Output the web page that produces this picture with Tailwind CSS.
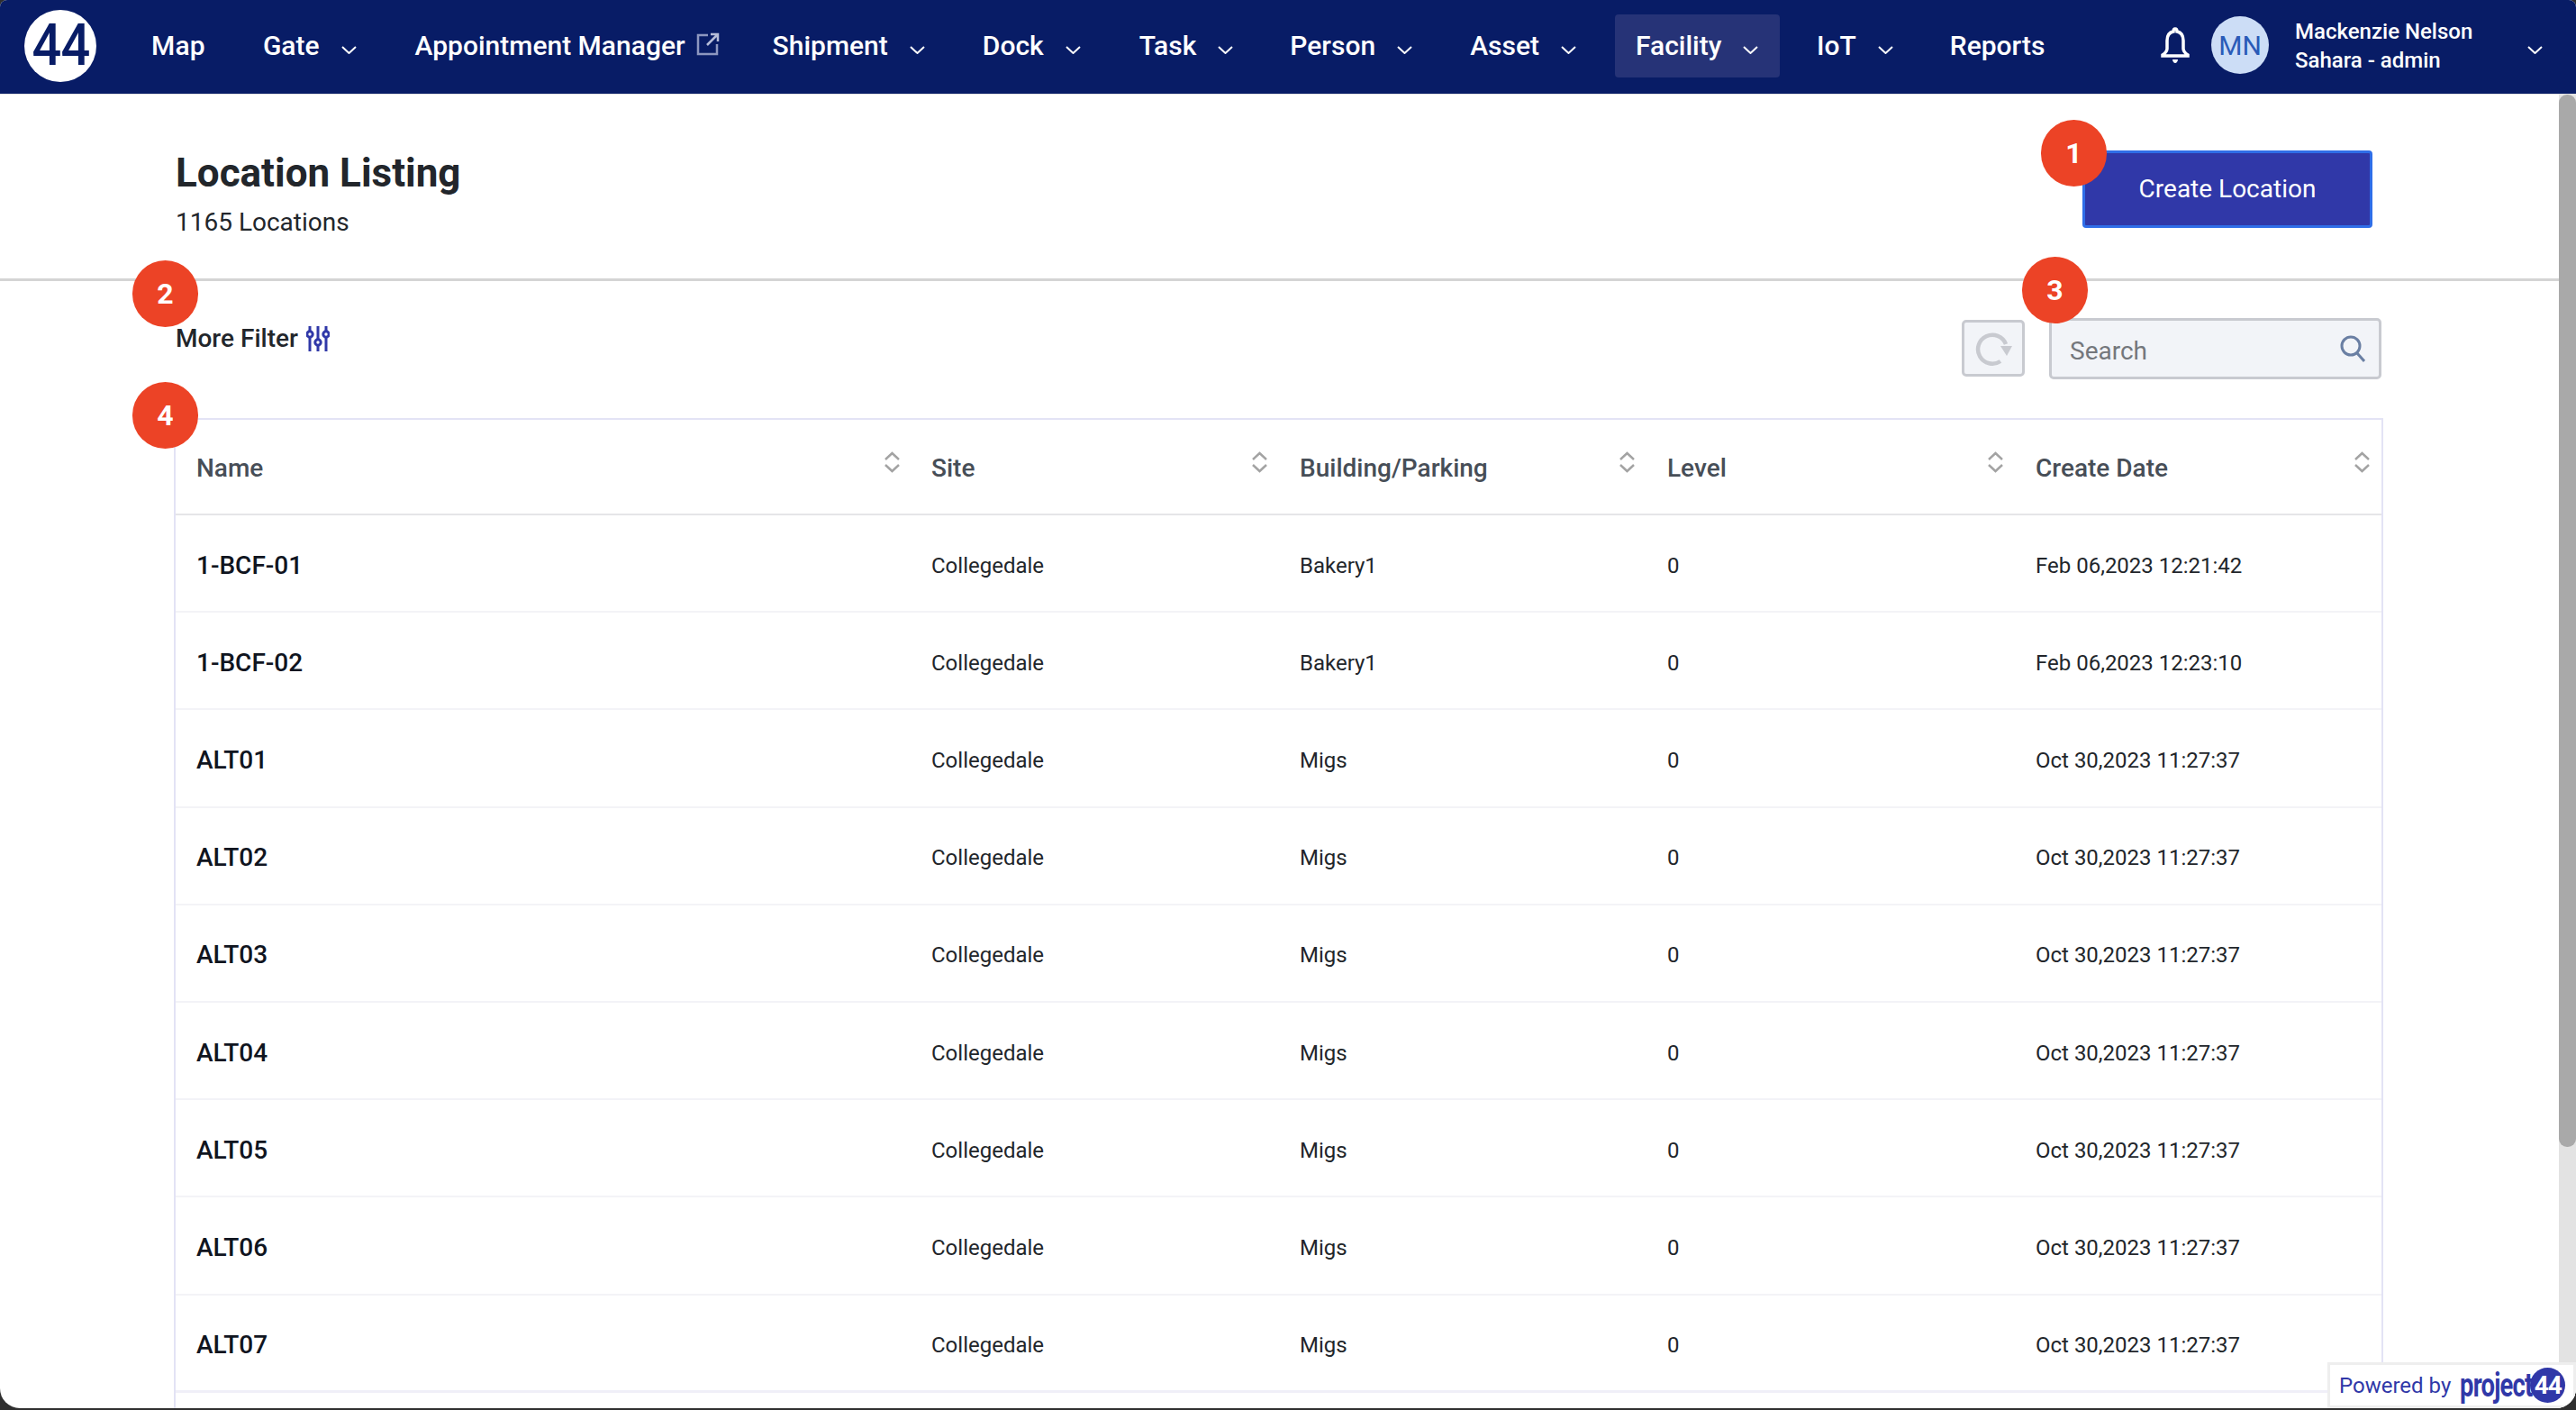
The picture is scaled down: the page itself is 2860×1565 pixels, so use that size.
<!DOCTYPE html>
<html lang="en">

<head>
    <meta charset="UTF-8">
    <meta name="viewport" content="width=device-width, initial-scale=1.0">
    <title>Location Listing</title>
    <script src="https://cdn.jsdelivr.net/npm/@tailwindcss/browser@4"></script>
</head>

<body class="bg-[#2f2f2f] font-['Roboto',sans-serif] overflow-hidden">
    <div class="relative h-[1563px] w-[2860px] overflow-hidden rounded-b-[22px] rounded-t-[8px] bg-white flex flex-col">

        <!-- Top nav -->
        <header class="h-[105px] shrink-0 pb-[3px] bg-[#081c66] border-b border-[#e4e4e4] flex items-center text-white text-[30px] font-medium">
            <div class="ml-[27px] w-[80px] h-[80px] rounded-full bg-white flex items-center justify-center text-[#081c66]">
                <span class="text-[64px] leading-none font-medium scale-x-90 tracking-[-1px]">44</span>
            </div>
            <a class="ml-[61px] tracking-[0.2px]">Map</a>
            <a class="ml-[64px] flex items-center gap-[24px]">Gate
                <svg class="w-[17px] h-[9px] mt-[10px]" viewBox="0 0 17 9" fill="none" stroke="white" stroke-width="2"><path d="M1 1l7.500 7 7.500-7"/></svg>
            </a>
            <a class="ml-[65px] flex items-center gap-[12px]">Appointment Manager
                <svg class="w-[26px] h-[26px] -mt-[4px]" viewBox="0 0 26 26" fill="none" stroke="#8d97c0" stroke-width="2.500"><path d="M13 3H2v21h21V13"/><path d="M12 14L24 2M16 2h8v8" stroke="#b6bdd9"/></svg>
            </a>
            <a class="ml-[59px] flex items-center gap-[24px]">Shipment
                <svg class="w-[17px] h-[9px] mt-[10px]" viewBox="0 0 17 9" fill="none" stroke="white" stroke-width="2"><path d="M1 1l7.500 7 7.500-7"/></svg>
            </a>
            <a class="ml-[64px] flex items-center gap-[24px]">Dock
                <svg class="w-[17px] h-[9px] mt-[10px]" viewBox="0 0 17 9" fill="none" stroke="white" stroke-width="2"><path d="M1 1l7.500 7 7.500-7"/></svg>
            </a>
            <a class="ml-[65px] flex items-center gap-[24px]">Task
                <svg class="w-[17px] h-[9px] mt-[10px]" viewBox="0 0 17 9" fill="none" stroke="white" stroke-width="2"><path d="M1 1l7.500 7 7.500-7"/></svg>
            </a>
            <a class="ml-[63px] flex items-center gap-[24px]">Person
                <svg class="w-[17px] h-[9px] mt-[10px]" viewBox="0 0 17 9" fill="none" stroke="white" stroke-width="2"><path d="M1 1l7.500 7 7.500-7"/></svg>
            </a>
            <a class="ml-[64px] flex items-center gap-[24px]">Asset
                <svg class="w-[17px] h-[9px] mt-[10px]" viewBox="0 0 17 9" fill="none" stroke="white" stroke-width="2"><path d="M1 1l7.500 7 7.500-7"/></svg>
            </a>
            <a class="ml-[43px] w-[183px] h-[70px] pl-[23px] rounded-[4px] bg-[#263377] flex items-center gap-[24px]">Facility
                <svg class="w-[17px] h-[9px] mt-[10px]" viewBox="0 0 17 9" fill="none" stroke="white" stroke-width="2"><path d="M1 1l7.500 7 7.500-7"/></svg>
            </a>
            <a class="ml-[41px] flex items-center gap-[24px]">IoT
                <svg class="w-[17px] h-[9px] mt-[10px]" viewBox="0 0 17 9" fill="none" stroke="white" stroke-width="2"><path d="M1 1l7.500 7 7.500-7"/></svg>
            </a>
            <a class="ml-[63px]">Reports</a>
            <svg class="absolute left-[2398px] top-[30px] w-[34px] h-[40px]" viewBox="0 0 34 40" fill="none" stroke="white" stroke-width="3.500"><path d="M17 2c-1 0-2 1-2 3-5 1-7 5-7 10v9c0 3-2 5-5 7v1h28v-1c-3-2-5-4-5-7v-9c0-5-2-9-7-10 0-2-1-3-2-3z"/><path d="M14 36c0 2 1.500 4 3 4s3-2 3-4" fill="white" stroke="none"/></svg>
            <div class="absolute left-[2455px] top-[18px] w-[64px] h-[64px] rounded-full bg-[#ccddf6] text-[#2a5bb8] text-[30px] font-normal flex items-center justify-center">MN</div>
            <div class="absolute left-[2548px] top-[19px] text-[24px] leading-[32px] font-medium">
                <div>Mackenzie Nelson</div>
                <div>Sahara - admin</div>
            </div>
            <svg class="absolute left-[2806px] top-[51px] w-[17px] h-[9px]" viewBox="0 0 17 9" fill="none" stroke="white" stroke-width="2"><path d="M1 1l7.500 7 7.500-7"/></svg>
        </header>

        <div class="flex flex-1 min-h-0">
            <main class="w-[2841px] shrink-0 overflow-hidden">
                <!-- Page title -->
                <section class="h-[207px] border-b-[3px] border-[#d4d4d4] pl-[195px] pr-[207px] flex justify-between">
                    <div class="pt-[62px]">
                        <h1 class="text-[44px] leading-[50px] font-bold text-[#22262b]">Location Listing</h1>
                        <p class="mt-[12px] text-[28px] leading-[36px] text-[#22262b]">1165 Locations</p>
                    </div>
                    <button class="mt-[62px] w-[322px] h-[86px] rounded-[4px] bg-[#3038a8] border-[3px] border-[#2f6ee8] text-white text-[28px]">Create Location</button>
                </section>

                <!-- Filter and search -->
                <section class="h-[152px] pl-[195px] pr-[197px] flex justify-between">
                    <div class="mt-[46px] h-[36px] flex items-center gap-[9px] text-[28px] font-medium text-[#22262b]">More Filter
                        <svg class="w-[26px] h-[28px]" viewBox="0 0 26 28" fill="none" stroke="#3038a8" stroke-width="3"><path d="M4 0v6M4 13v15M13 0v14M13 21v7M22 0v5M22 13v15"/><circle cx="4" cy="9" r="3.200"/><circle cx="13" cy="18" r="3.200"/><circle cx="22" cy="9" r="3.200"/></svg>
                    </div>
                    <div class="flex gap-[27px] mt-[41px]">
                        <button class="mt-[2px] w-[70px] h-[63px] rounded-[5px] bg-[#f2f4f8] border-[3px] border-[#c8cad0] flex items-center justify-center">
                            <svg class="w-[44px] h-[40px]" viewBox="0 0 44 40" fill="none"><path d="M30 34A16 16 0 1 1 36 15" stroke="#c8cad0" stroke-width="4.500"/><path d="M30 17h13l-6 11z" fill="#c8cad0"/></svg>
                        </button>
                        <div class="w-[369px] h-[68px] rounded-[5px] bg-[#f2f4f8] border-[3px] border-[#c8cad0] flex items-center justify-between pl-[20px] pr-[15px]">
                            <span class="mt-[6px] text-[28px] text-[#74777c]">Search</span>
                            <svg class="w-[28px] h-[30px]" viewBox="0 0 28 30" fill="none" stroke="#6a7fa3" stroke-width="3"><circle cx="12" cy="12" r="10"/><path d="M19 20l8 9"/></svg>
                        </div>
                    </div>
                </section>

                <!-- Table -->
                <section class="ml-[193px] w-[2453px] border-x-[2px] border-t-[2px] border-[#e3e3f5]">
                    <div class="h-[106px] border-b-[2px] border-[#e5e5e8] grid grid-cols-[816px_409px_408px_409px_1fr] text-[28px] font-medium text-[#474e57]">
                        <div class="pl-[23px] pr-[11px] flex justify-between pt-[33px]"><span>Name</span>
                            <svg class="w-[19px] h-[24px] mt-[2px]" viewBox="0 0 19 24" fill="none" stroke="#a3a3a3" stroke-width="2.500"><path d="M2 9l7.500-7 7.500 7M2 15l7.500 7 7.500-7"/></svg>
                        </div>
                        <div class="pl-[23px] pr-[12px] flex justify-between pt-[33px]"><span>Site</span>
                            <svg class="w-[19px] h-[24px] mt-[2px]" viewBox="0 0 19 24" fill="none" stroke="#a3a3a3" stroke-width="2.500"><path d="M2 9l7.500-7 7.500 7M2 15l7.500 7 7.500-7"/></svg>
                        </div>
                        <div class="pl-[23px] pr-[12px] flex justify-between pt-[33px]"><span>Building/Parking</span>
                            <svg class="w-[19px] h-[24px] mt-[2px]" viewBox="0 0 19 24" fill="none" stroke="#a3a3a3" stroke-width="2.500"><path d="M2 9l7.500-7 7.500 7M2 15l7.500 7 7.500-7"/></svg>
                        </div>
                        <div class="pl-[23px] pr-[12px] flex justify-between pt-[33px]"><span>Level</span>
                            <svg class="w-[19px] h-[24px] mt-[2px]" viewBox="0 0 19 24" fill="none" stroke="#a3a3a3" stroke-width="2.500"><path d="M2 9l7.500-7 7.500 7M2 15l7.500 7 7.500-7"/></svg>
                        </div>
                        <div class="pl-[23px] pr-[12px] flex justify-between pt-[33px]"><span>Create Date</span>
                            <svg class="w-[19px] h-[24px] mt-[2px]" viewBox="0 0 19 24" fill="none" stroke="#a3a3a3" stroke-width="2.500"><path d="M2 9l7.500-7 7.500 7M2 15l7.500 7 7.500-7"/></svg>
                        </div>
                    </div>

                    <div class="h-[108.200px] pt-[5px] border-b-[2px] border-[#f3f3f7] grid grid-cols-[816px_409px_408px_409px_1fr] items-center text-[24px] text-[#22262b] [&>div]:pl-[23px]">
                        <div class="text-[28px] font-medium text-[#10151f]">1-BCF-01</div><div>Collegedale</div><div>Bakery1</div><div>0</div><div>Feb 06,2023 12:21:42</div>
                    </div>
                    <div class="h-[108.200px] pt-[5px] border-b-[2px] border-[#f3f3f7] grid grid-cols-[816px_409px_408px_409px_1fr] items-center text-[24px] text-[#22262b] [&>div]:pl-[23px]">
                        <div class="text-[28px] font-medium text-[#10151f]">1-BCF-02</div><div>Collegedale</div><div>Bakery1</div><div>0</div><div>Feb 06,2023 12:23:10</div>
                    </div>
                    <div class="h-[108.200px] pt-[5px] border-b-[2px] border-[#f3f3f7] grid grid-cols-[816px_409px_408px_409px_1fr] items-center text-[24px] text-[#22262b] [&>div]:pl-[23px]">
                        <div class="text-[28px] font-medium text-[#10151f]">ALT01</div><div>Collegedale</div><div>Migs</div><div>0</div><div>Oct 30,2023 11:27:37</div>
                    </div>
                    <div class="h-[108.200px] pt-[5px] border-b-[2px] border-[#f3f3f7] grid grid-cols-[816px_409px_408px_409px_1fr] items-center text-[24px] text-[#22262b] [&>div]:pl-[23px]">
                        <div class="text-[28px] font-medium text-[#10151f]">ALT02</div><div>Collegedale</div><div>Migs</div><div>0</div><div>Oct 30,2023 11:27:37</div>
                    </div>
                    <div class="h-[108.200px] pt-[5px] border-b-[2px] border-[#f3f3f7] grid grid-cols-[816px_409px_408px_409px_1fr] items-center text-[24px] text-[#22262b] [&>div]:pl-[23px]">
                        <div class="text-[28px] font-medium text-[#10151f]">ALT03</div><div>Collegedale</div><div>Migs</div><div>0</div><div>Oct 30,2023 11:27:37</div>
                    </div>
                    <div class="h-[108.200px] pt-[5px] border-b-[2px] border-[#f3f3f7] grid grid-cols-[816px_409px_408px_409px_1fr] items-center text-[24px] text-[#22262b] [&>div]:pl-[23px]">
                        <div class="text-[28px] font-medium text-[#10151f]">ALT04</div><div>Collegedale</div><div>Migs</div><div>0</div><div>Oct 30,2023 11:27:37</div>
                    </div>
                    <div class="h-[108.200px] pt-[5px] border-b-[2px] border-[#f3f3f7] grid grid-cols-[816px_409px_408px_409px_1fr] items-center text-[24px] text-[#22262b] [&>div]:pl-[23px]">
                        <div class="text-[28px] font-medium text-[#10151f]">ALT05</div><div>Collegedale</div><div>Migs</div><div>0</div><div>Oct 30,2023 11:27:37</div>
                    </div>
                    <div class="h-[108.200px] pt-[5px] border-b-[2px] border-[#f3f3f7] grid grid-cols-[816px_409px_408px_409px_1fr] items-center text-[24px] text-[#22262b] [&>div]:pl-[23px]">
                        <div class="text-[28px] font-medium text-[#10151f]">ALT06</div><div>Collegedale</div><div>Migs</div><div>0</div><div>Oct 30,2023 11:27:37</div>
                    </div>
                    <div class="h-[108.200px] pt-[5px] border-b-[3px] border-[#f0eff8] grid grid-cols-[816px_409px_408px_409px_1fr] items-center text-[24px] text-[#22262b] [&>div]:pl-[23px]">
                        <div class="text-[28px] font-medium text-[#10151f]">ALT07</div><div>Collegedale</div><div>Migs</div><div>0</div><div>Oct 30,2023 11:27:37</div>
                    </div>
                    <div class="h-[40px]"></div>
                </section>
            </main>

            <!-- Scrollbar -->
            <div class="w-[19px] bg-[#e3e3e3]">
                <div class="h-[1168px] bg-[#a9a9a9] rounded-[9px]"></div>
            </div>
        </div>

        <!-- Step badges -->
        <div class="absolute left-[2266px] top-[133px] w-[73px] h-[74px] rounded-full bg-[#ec4326] text-white text-[32px] font-bold flex items-center justify-center">1</div>
        <div class="absolute left-[147px] top-[289px] w-[73px] h-[74px] rounded-full bg-[#ec4326] text-white text-[32px] font-bold flex items-center justify-center">2</div>
        <div class="absolute left-[2245px] top-[285px] w-[73px] h-[74px] rounded-full bg-[#ec4326] text-white text-[32px] font-bold flex items-center justify-center">3</div>
        <div class="absolute left-[147px] top-[424px] w-[73px] h-[74px] rounded-full bg-[#ec4326] text-white text-[32px] font-bold flex items-center justify-center">4</div>

        <!-- Powered by -->
        <div class="absolute left-[2584px] top-[1512px] w-[276px] h-[51px] bg-white border-[3px] border-[#eeeeee] flex items-center pl-[10px] text-[#3038a8]">
            <span class="text-[24px]">Powered by</span>
            <span class="ml-[10px] w-[78px] text-[36px] leading-none font-bold tracking-[-1px] whitespace-nowrap origin-left scale-x-[0.76]">project</span>
            <span class="w-[39px] h-[39px] rounded-full bg-[#3038a8] text-white text-[28px] font-bold tracking-[-1px] flex items-center justify-center">44</span>
        </div>
    </div>
</body>

</html>
